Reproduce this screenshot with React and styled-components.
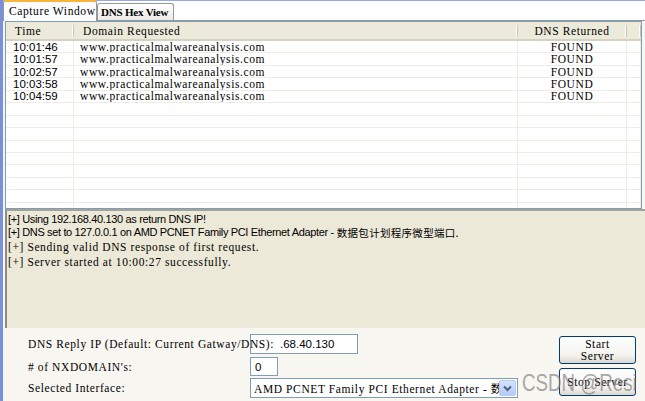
import styled, { createGlobalStyle } from 'styled-components';

const MONO = `"Liberation Serif", "Times New Roman", "Noto Sans CJK SC", serif`;
const SANS = `"Liberation Sans", Arial, "Noto Sans CJK SC", sans-serif`;
const SPACING = '0.6px';

const GlobalStyle = createGlobalStyle`
  html, body {
    margin: 0;
    padding: 0;
    background: #ffffff;
  }
  body {
    font-family: ${SANS};
  }
`;

const Window = styled.div`
  position: relative;
  width: 645px;
  height: 401px;
  box-sizing: border-box;
  border-left: 3px solid #7b90da;
  display: flex;
  flex-direction: column;
  background: #f7f6f1;
  overflow: hidden;
`;

const TabStrip = styled.div`
  height: 21px;
  box-sizing: border-box;
  display: flex;
  align-items: flex-end;
  background: #ffffff;
  box-shadow: inset 0 1px 0 #93a9e4;
  border-bottom: 1px solid #919b9c;
`;

const Tab = styled.div`
  box-sizing: border-box;
  display: flex;
  align-items: center;
  border: 1px solid #919b9c;
  border-bottom: none;
  border-radius: 3px 3px 0 0;
  font-family: ${MONO};
  font-size: 11.5px;
  letter-spacing: ${SPACING};
  color: #000;
  white-space: nowrap;
  overflow: hidden;
  width: ${(p) => p.$width}px;
  ${(p) =>
    p.$active
      ? `
    height: 21px;
    margin-bottom: -1px;
    padding: 0 0 2px 5px;
    background: #fcfcfe;
    border-top: 2px solid #f8b53c;
    position: relative;
    z-index: 1;
  `
      : `
    height: 17px;
    padding-left: 3px;
    background: linear-gradient(#ffffff, #ecebe6);
    font-weight: bold;
    font-size: 11px;
    letter-spacing: -0.2px;
  `}
`;

const List = styled.div`
  height: 188px;
  margin: 0 3px 0 2px;
  box-sizing: border-box;
  border: 1px solid #7f9db9;
  background: #ffffff;
  overflow: hidden;
`;

const COLS = '68px 444px 109px 1fr';

const Header = styled.div`
  display: grid;
  grid-template-columns: ${COLS};
  height: 19px;
  box-sizing: border-box;
  background: #ebeadb;
  border-bottom: 2px solid #d6d2c2;
`;

const HeaderCell = styled.div`
  display: flex;
  align-items: center;
  justify-content: ${(p) => (p.$center ? 'center' : 'flex-start')};
  padding-left: ${(p) => (p.$center ? 0 : 9)}px;
  font-family: ${MONO};
  font-size: 11.5px;
  letter-spacing: ${SPACING};
  color: #000;
  white-space: nowrap;
  border-right: 1px solid #c7c5b2;
  box-shadow: inset -1px 0 0 #ffffff;
  margin: 3px 0;
`;

const Row = styled.div`
  display: grid;
  grid-template-columns: ${COLS};
  height: 12.45px;
`;

const Cell = styled.div`
  box-sizing: border-box;
  display: flex;
  align-items: center;
  justify-content: ${(p) => (p.$center ? 'center' : 'flex-start')};
  padding-left: ${(p) => p.$pad || 0}px;
  border-right: 1px solid #efede3;
  border-bottom: 1px solid #efede3;
  font-family: ${(p) => (p.$sans ? SANS : MONO)};
  font-size: 11.5px;
  letter-spacing: ${(p) => (p.$sans ? '0' : SPACING)};
  color: #000;
  white-space: nowrap;
  overflow: hidden;
  line-height: 12px;
`;

const Log = styled.div`
  height: 119px;
  flex: none;
  margin-left: 2px;
  box-sizing: border-box;
  border-top: 2px solid #a3a39c;
  border-left: 2px solid #8d8c86;
  background: #ece9d8;
  padding: 1px 0 0 1px;
`;

const LogLine = styled.div`
  height: ${(p) => (p.$mono ? 15 : 13.5)}px;
  display: flex;
  align-items: center;
  white-space: nowrap;
  color: #000;
  font-family: ${(p) => (p.$mono ? MONO : SANS)};
  font-size: ${(p) => (p.$mono ? 11.5 : 11)}px;
  letter-spacing: ${(p) => (p.$mono ? SPACING : '-0.35px')};
`;

const Cjk = styled.span`
  font-family: "Noto Sans CJK SC", sans-serif;
  font-size: 10.5px;
  letter-spacing: 0.3px;
  margin-left: 3px;
`;

const Form = styled.div`
  flex: 1;
  display: flex;
`;

const Fields = styled.div`
  display: flex;
  flex-direction: column;
  padding: 6px 0 0 25px;
`;

const Field = styled.div`
  display: grid;
  grid-template-columns: 222px auto;
  align-items: center;
  margin-top: ${(p) => p.$gap || 0}px;
`;

const Label = styled.label`
  position: relative;
  z-index: 1;
  font-family: ${MONO};
  font-size: 11.5px;
  letter-spacing: ${SPACING};
  color: #000;
  white-space: nowrap;
`;

const TextBox = styled.div`
  box-sizing: border-box;
  width: ${(p) => p.$width}px;
  height: ${(p) => p.$height}px;
  border: 1px solid #7f9db9;
  background: #ffffff;
  display: flex;
  align-items: center;
  padding-left: ${(p) => p.$pad || 4}px;
  font-family: ${SANS};
  font-size: 11.5px;
  color: #000;
`;

const Select = styled.div`
  box-sizing: border-box;
  width: 268px;
  height: 20px;
  border: 1px solid #7f9db9;
  background: #ffffff;
  display: flex;
  align-items: center;
  padding: 1px;
`;

const SelectText = styled.div`
  flex: 1;
  overflow: hidden;
  white-space: nowrap;
  padding-left: 2px;
  font-family: ${MONO};
  font-size: 11.5px;
  letter-spacing: ${SPACING};
  color: #000;
`;

const DropButton = styled.div`
  box-sizing: border-box;
  width: 17px;
  height: 16px;
  border: 1px solid #b9cbf5;
  border-radius: 2px;
  background: linear-gradient(#d6e2fd, #b6caf7);
  display: flex;
  align-items: center;
  justify-content: center;
`;

const Buttons = styled.div`
  margin-left: auto;
  margin-right: 9px;
  padding-top: 8px;
  display: flex;
  flex-direction: column;
  gap: 4px;
`;

const Button = styled.button`
  box-sizing: border-box;
  width: 77px;
  height: ${(p) => p.$height}px;
  padding: 0;
  border: 1px solid #003c74;
  border-radius: 3px;
  background: linear-gradient(#ffffff, #f3f3ef 70%, #dcd8cd);
  font-family: ${MONO};
  font-size: 11.5px;
  letter-spacing: ${SPACING};
  line-height: 12px;
  color: #000;
  white-space: nowrap;
`;

const Watermark = styled.div`
  position: absolute;
  left: 519px;
  top: 369px;
  font-family: ${SANS};
  font-size: 24px;
  color: rgba(130, 130, 130, 0.7);
  transform: scaleX(0.78);
  transform-origin: left center;
  white-space: nowrap;
  pointer-events: none;
`;

const rows = [
  ['10:01:46', 'www.practicalmalwareanalysis.com', 'FOUND'],
  ['10:01:57', 'www.practicalmalwareanalysis.com', 'FOUND'],
  ['10:02:57', 'www.practicalmalwareanalysis.com', 'FOUND'],
  ['10:03:58', 'www.practicalmalwareanalysis.com', 'FOUND'],
  ['10:04:59', 'www.practicalmalwareanalysis.com', 'FOUND'],
];

// 后面补上空行
const filled = [...rows, ...Array.from({ length: 10 }, () => ['', '', ''])];

function App() {
  return (
    <Window>
      <GlobalStyle />
      <TabStrip>
        <Tab $active $width={94}>Capture Window</Tab>
        <Tab $width={77}>DNS Hex View</Tab>
      </TabStrip>

      <List>
        <Header>
          <HeaderCell>Time</HeaderCell>
          <HeaderCell>Domain Requested</HeaderCell>
          <HeaderCell $center>DNS Returned</HeaderCell>
          <HeaderCell />
        </Header>
        {filled.map((r, i) => (
          <Row key={i}>
            <Cell $sans $pad={7}>{r[0]}</Cell>
            <Cell $pad={6}>{r[1]}</Cell>
            <Cell $center>{r[2]}</Cell>
            <Cell />
          </Row>
        ))}
      </List>

      <Log>
        <LogLine>[+] Using 192.168.40.130 as return DNS IP!</LogLine>
        <LogLine>
          [+] DNS set to 127.0.0.1 on AMD PCNET Family PCI Ethernet Adapter -
          <Cjk>数据包计划程序微型端口.</Cjk>
        </LogLine>
        <LogLine $mono>[+] Sending valid DNS response of first request.</LogLine>
        <LogLine $mono>[+] Server started at 10:00:27 successfully.</LogLine>
      </Log>

      <Form>
        <Fields>
          <Field>
            <Label>DNS Reply IP (Default: Current Gatway/DNS):</Label>
            <TextBox $width={108} $height={20} $pad={29}>.68.40.130</TextBox>
          </Field>
          <Field $gap={3}>
            <Label># of NXDOMAIN's:</Label>
            <TextBox $width={28} $height={19}>0</TextBox>
          </Field>
          <Field $gap={2}>
            <Label>Selected Interface:</Label>
            <Select>
              <SelectText>AMD PCNET Family PCI Ethernet Adapter - 数据包</SelectText>
              <DropButton>
                <svg width="9" height="7" viewBox="0 0 9 7">
                  <path d="M1 1.5 L4.5 5 L8 1.5" fill="none" stroke="#4d6185" strokeWidth="2" />
                </svg>
              </DropButton>
            </Select>
          </Field>
        </Fields>
        <Buttons>
          <Button $height={28}>
            Start
            <br />
            Server
          </Button>
          <Button $height={28}>Stop Server</Button>
        </Buttons>
      </Form>

      <Watermark>CSDN @Resi</Watermark>
    </Window>
  );
}

export default App;
